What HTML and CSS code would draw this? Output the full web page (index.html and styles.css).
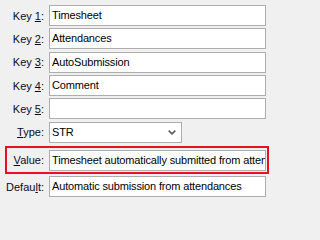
FILE: index.html
```html
<!DOCTYPE html>
<html>
<head>
<meta charset="utf-8">
<link rel="stylesheet" href="styles.css">
</head>
<body>
<div class="form">
  <div class="row"><span class="lbl">Key <u>1</u>:</span><div class="field">Timesheet</div></div>
  <div class="row"><span class="lbl">Key <u>2</u>:</span><div class="field">Attendances</div></div>
  <div class="row"><span class="lbl">Key <u>3</u>:</span><div class="field">AutoSubmission</div></div>
  <div class="row"><span class="lbl">Key <u>4</u>:</span><div class="field">Comment</div></div>
  <div class="row"><span class="lbl">Key <u>5</u>:</span><div class="field"></div></div>
  <div class="row"><span class="lbl"><u>T</u>ype:</span><div class="field select"><span>STR</span><svg class="chev" width="8" height="5" viewBox="0 0 8 5"><path d="M0.7 0.7 L4 3.8 L7.3 0.7" fill="none" stroke="#5a5a5a" stroke-width="1.6"/></svg></div></div>
  <div class="row hl"><span class="lbl"><u>V</u>alue:</span><div class="field">Timesheet automatically submitted from attendances</div></div>
  <div class="row"><span class="lbl">Defau<u>l</u>t:</span><div class="field">Automatic submission from attendances</div></div>
</div>
</body>
</html>
```

FILE: styles.css
```css
html, body {
  margin: 0;
  padding: 0;
  background: #f0f0f0;
}
body {
  font-family: "Liberation Sans", Arial, sans-serif;
  font-size: 11px;
  color: #000;
  width: 270px;
  height: 202px;
  overflow: hidden;
}
.form {
  display: flex;
  flex-direction: column;
  padding-top: 5px;
  gap: 2.35px;
}
.row {
  display: flex;
  align-items: center;
  height: 21px;
}
.lbl {
  width: 44px;
  text-align: right;
  padding-right: 5px;
  flex: none;
  white-space: nowrap;
  color: #0a0a1e;
}
.lbl u {
  text-decoration-thickness: 1px;
  text-underline-offset: 1px;
}
.field {
  box-sizing: border-box;
  width: 217px;
  height: 21px;
  background: #fff;
  border: 1px solid #adadad;
  padding: 0 2px;
  line-height: 19px;
  letter-spacing: -0.15px;
  white-space: nowrap;
  overflow: hidden;
  flex: none;
}
.select {
  width: 133px;
  display: flex;
  align-items: center;
  justify-content: space-between;
  padding-right: 5px;
}
.chev {
  display: block;
  margin-top: 1px;
}
.row.hl {
  box-sizing: border-box;
  height: 28px;
  margin: 1px 1px 0 5px;
  border: 2px solid #e81123;
  padding: 2px 1px 2px 0;
}
.row.hl .lbl {
  width: 37px;
}
```
